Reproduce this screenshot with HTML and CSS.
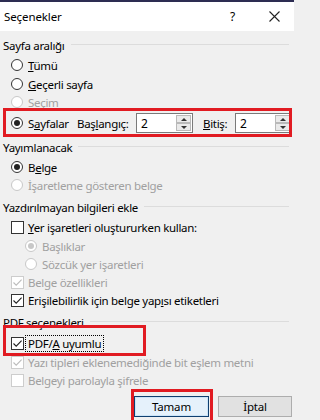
FILE: index.html
```html
<!DOCTYPE html>
<html lang="tr">
<head>
<meta charset="utf-8">
<title>Seçenekler</title>
<link rel="stylesheet" href="styles.css">
</head>
<body>
<div class="dialog">
  <div class="titlebar">
    <span class="title">Seçenekler</span>
    <span class="help">?</span>
    <span class="close"><svg width="11" height="11" viewBox="0 0 11 11"><path d="M0.5 0.5 L10.5 10.5 M10.5 0.5 L0.5 10.5" stroke="#222" stroke-width="1.1" fill="none"/></svg></span>
  </div>
  <div class="content">
    <div class="head mt5"><span>Sayfa aralığı</span><i class="rule"></i></div>
    <div class="opt mt2"><span class="radio"></span><span><u>T</u>ümü</span></div>
    <div class="opt mt1"><span class="radio"></span><span><u>G</u>eçerli sayfa</span></div>
    <div class="opt dis"><span class="radio"></span><span>Se<u>ç</u>im</span></div>
    <div class="range mt2">
      <div class="range-opt"><span class="radio on"></span><span>S<u>a</u>yfalar</span></div>
      <span class="range-lbl">Baş<u>l</u>angıç:</span>
      <div class="spin"><span class="val">2</span><span class="arrows"><i class="up"></i><i class="down"></i></span></div>
      <span class="range-lbl2"><u>B</u>itiş:</span>
      <div class="spin"><span class="val">2</span><span class="arrows"><i class="up"></i><i class="down"></i></span></div>
    </div>
    <div class="head mt5"><span>Yayımlanacak</span><i class="rule"></i></div>
    <div class="opt mt2"><span class="radio on"></span><span>B<u>e</u>lge</span></div>
    <div class="opt dis"><span class="radio"></span><span>İşaretleme gösteren belge</span></div>
    <div class="head mt4"><span>Yazdırılmayan bilgileri ekle</span><i class="rule"></i></div>
    <div class="opt mt2"><span class="check"></span><span><u>Y</u>er işaretleri oluştururken kullan:</span></div>
    <div class="opt sub dis mt1"><span class="radio on"></span><span>Başlıklar</span></div>
    <div class="opt sub dis"><span class="radio"></span><span>Sözcük yer işaretleri</span></div>
    <div class="opt dis"><span class="check on"><svg width="11" height="11" viewBox="0 0 11 11"><path d="M1.5 5.5 L4.2 8.2 L9.6 2.6" stroke="currentColor" stroke-width="1.1" fill="none"/></svg></span><span>Belge özellikleri</span></div>
    <div class="opt"><span class="check on"><svg width="11" height="11" viewBox="0 0 11 11"><path d="M1.5 5.5 L4.2 8.2 L9.6 2.6" stroke="currentColor" stroke-width="1.1" fill="none"/></svg></span><span>Erişilebilirlik için belge yap<u>ı</u>sı etiketleri</span></div>
    <div class="head mt4"><span>PDF seçenekleri</span><i class="rule"></i></div>
    <div class="opt mt3"><span class="check on"><svg width="11" height="11" viewBox="0 0 11 11"><path d="M1.5 5.5 L4.2 8.2 L9.6 2.6" stroke="currentColor" stroke-width="1.1" fill="none"/></svg></span><span class="focus">PDF/<u>A</u> uyumlu</span></div>
    <div class="opt dis mt1"><span class="check on"><svg width="11" height="11" viewBox="0 0 11 11"><path d="M1.5 5.5 L4.2 8.2 L9.6 2.6" stroke="currentColor" stroke-width="1.1" fill="none"/></svg></span><span>Yazı tipleri eklenemediğinde bit eşlem metni</span></div>
    <div class="opt dis"><span class="check"></span><span>Belgeyi parolayla şifrele</span></div>
    <div class="buttons">
      <button class="btn default">Tamam</button>
      <button class="btn">İptal</button>
    </div>
  </div>
  <div class="mark mark-range"></div>
  <div class="mark mark-pdfa"></div>
  <div class="mark mark-ok"></div>
</div>
</body>
</html>
```
FILE: styles.css
```css
html, body {
  margin: 0;
  padding: 0;
}
body {
  width: 294px;
  height: 420px;
  overflow: hidden;
  background: #f0f0f0;
  font-family: "Noto Sans", "Open Sans", sans-serif;
  font-size: 11.5px;
  letter-spacing: -0.3px;
  color: #000;
}
.dialog {
  position: relative;
  width: 294px;
  height: 420px;
}
.titlebar {
  height: 29px;
  border-top: 2px solid #2d2d52;
  background: #fff;
  display: flex;
  align-items: center;
  font-size: 11.5px;
  letter-spacing: -0.1px;
}
.title {
  padding-left: 4px;
  flex: 1;
}
.help {
  width: 12px;
  margin-right: 27px;
  font-size: 12px;
}
.close {
  display: flex;
  margin-right: 14px;
}
.content {
  display: flex;
  flex-direction: column;
}
.mt1 { margin-top: 1px; }
.mt2 { margin-top: 2px; }
.mt3 { margin-top: 3px; }
.mt4 { margin-top: 4px; }
.mt5 { margin-top: 5px; }
.head {
  height: 18px;
  display: flex;
  align-items: center;
  padding-left: 3px;
  padding-right: 5px;
}
.rule {
  flex: 1;
  height: 1px;
  background: #dcdcdc;
  margin-left: 6px;
  margin-top: -1px;
}
.opt {
  height: 18px;
  display: flex;
  align-items: center;
  padding-left: 11px;
  white-space: nowrap;
}
.opt.sub {
  padding-left: 25px;
}
.dis {
  color: #a0a0a0;
}
.radio {
  box-sizing: border-box;
  width: 12px;
  height: 12px;
  border: 1px solid #333;
  border-radius: 50%;
  background: #fff;
  margin-right: 5px;
  display: flex;
  align-items: center;
  justify-content: center;
}
.radio.on::after {
  content: "";
  width: 6px;
  height: 6px;
  border-radius: 50%;
  background: #222;
}
.dis .radio {
  border-color: #c8c8c8;
}
.dis .radio.on::after {
  background: #c8c8c8;
}
.check {
  box-sizing: border-box;
  width: 13px;
  height: 13px;
  border: 1px solid #333;
  background: #fff;
  margin-right: 4px;
  display: flex;
  align-items: center;
  justify-content: center;
  color: #222;
}
.dis .check {
  border-color: #cdcdcd;
  color: #bcbcbc;
}
.focus {
  outline: 1px dotted #000;
  outline-offset: 0;
  padding: 1px 2px;
  margin-left: -2px;
  line-height: 13px;
}
.range {
  height: 20px;
  display: flex;
  align-items: center;
  padding-left: 11px;
}
.range-opt {
  width: 66px;
  display: flex;
  align-items: center;
}
.range-opt .radio {
  margin-right: 5px;
}
.range-lbl {
  width: 59px;
}
.range-lbl2 {
  width: 32px;
  margin-left: 10px;
}
.spin {
  box-sizing: border-box;
  width: 57px;
  height: 20px;
  border: 1px solid #7a7a7a;
  background: #fff;
  display: flex;
}
.val {
  flex: 1;
  padding-left: 4px;
  line-height: 19px;
  font-size: 12px;
}
.arrows {
  width: 15px;
  display: flex;
  flex-direction: column;
  padding: 1px;
}
.arrows i {
  flex: 1;
  box-sizing: border-box;
  border: 1px solid #b9b9b9;
  background: #eaeaea;
  display: flex;
  align-items: center;
  justify-content: center;
}
.arrows .up::after {
  content: "";
  border-left: 3px solid transparent;
  border-right: 3px solid transparent;
  border-bottom: 3px solid #333;
}
.arrows .down::after {
  content: "";
  border-left: 3px solid transparent;
  border-right: 3px solid transparent;
  border-top: 3px solid #333;
}
.buttons {
  display: flex;
  justify-content: flex-end;
  gap: 9px;
  margin-top: 7px;
  padding-right: 2px;
}
.btn {
  box-sizing: border-box;
  width: 74px;
  height: 21px;
  border: 1px solid #adadad;
  background: #e1e1e1;
  font-family: inherit;
  font-size: 11.5px;
  letter-spacing: -0.2px;
  color: #000;
  padding: 0;
  line-height: 19px;
}
.btn.default {
  width: 75px;
  border: 1px solid #0f3f70;
  background: #e5f1fb;
  box-shadow: inset 0 0 0 1px #cce4f7;
}
.mark {
  position: absolute;
  box-sizing: border-box;
  border: 3px solid #e11b22;
}
.mark-range {
  left: 3px;
  top: 108px;
  width: 289px;
  height: 29px;
}
.mark-pdfa {
  left: 3px;
  top: 325px;
  width: 143px;
  height: 31px;
}
.mark-ok {
  left: 131px;
  top: 389px;
  width: 82px;
  height: 34px;
}
```
